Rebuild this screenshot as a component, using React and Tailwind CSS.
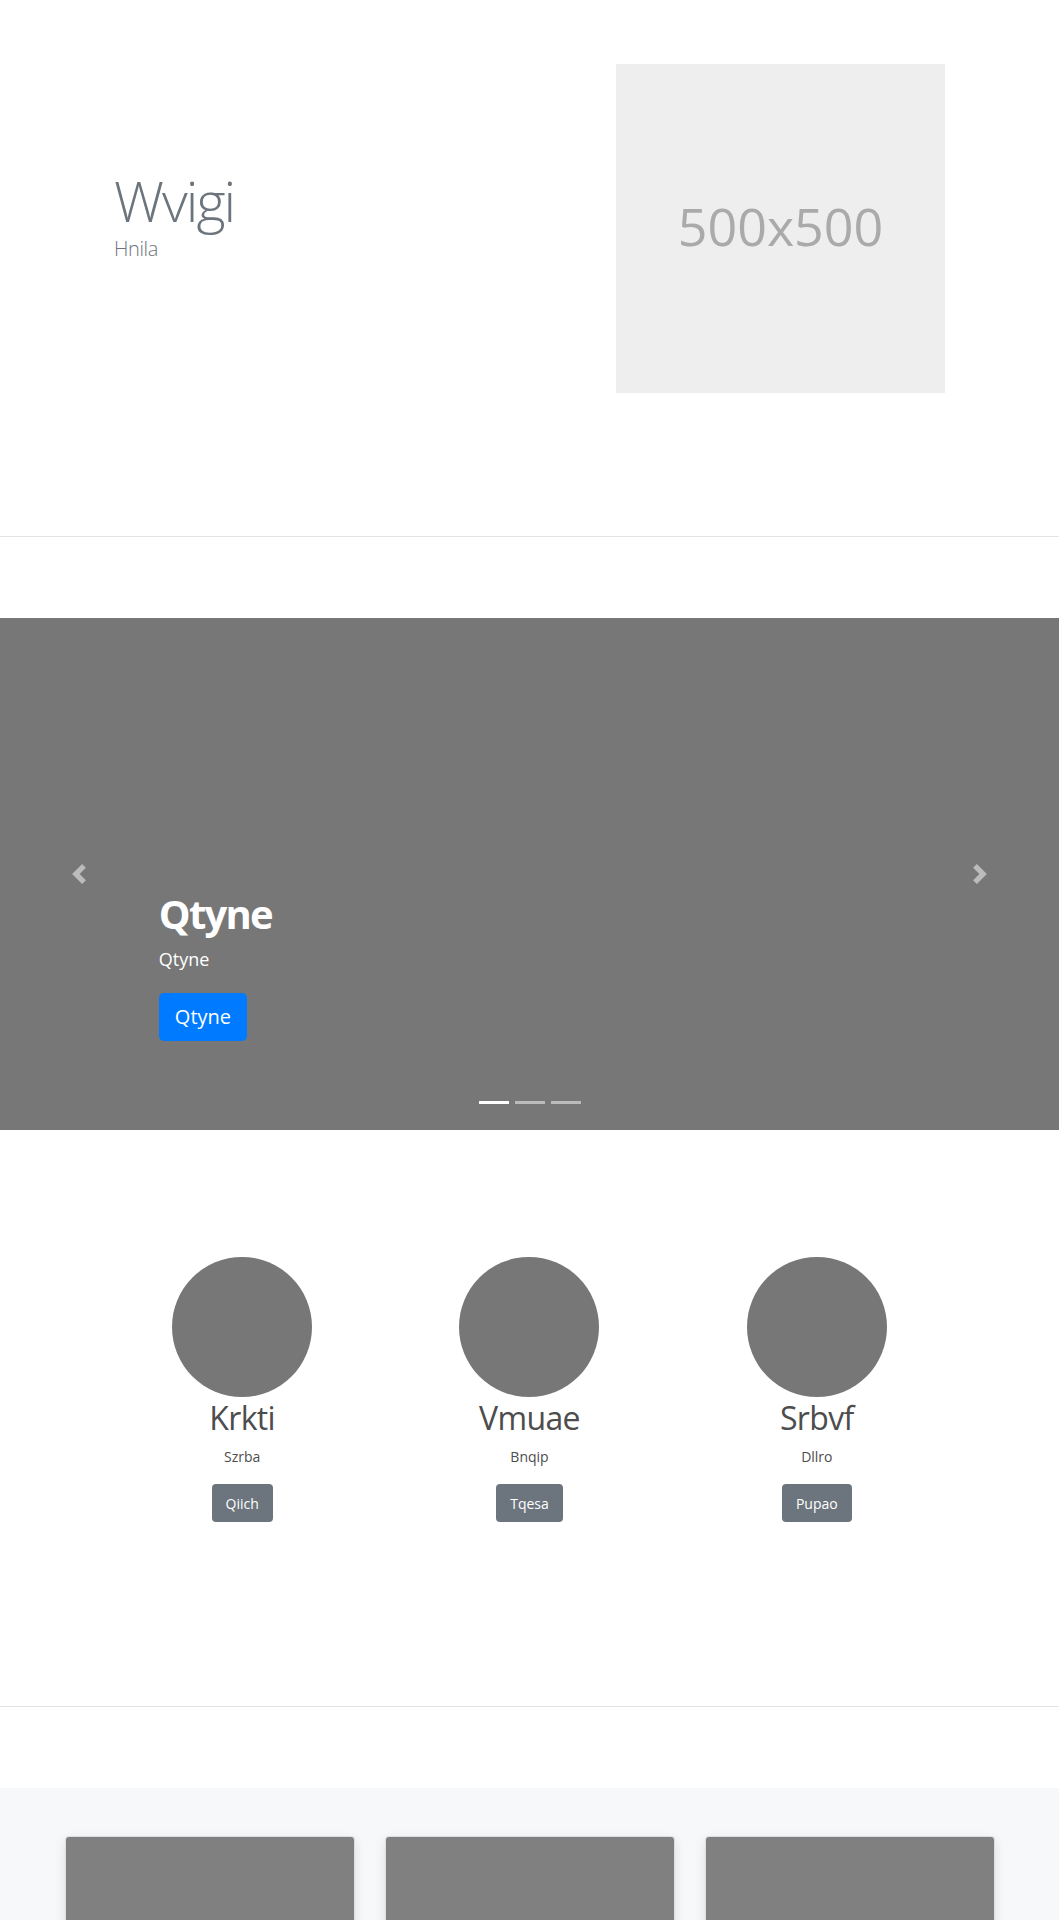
import React from "react";

const font = { fontFamily: '"Open Sans", "Noto Sans", "Liberation Sans", sans-serif' };

function ChevronLeft() {
  return (
    <svg width="20" height="20" viewBox="0 0 8 8" fill="#fff">
      <path d="M5.25 0l-4 4 4 4 1.5-1.5L4.25 4l2.5-2.5L5.25 0z" />
    </svg>
  );
}
function ChevronRight() {
  return (
    <svg width="20" height="20" viewBox="0 0 8 8" fill="#fff">
      <path d="M2.75 0l-1.5 1.5L3.75 4l-2.5 2.5L2.75 8l4-4-4-4z" />
    </svg>
  );
}

const items = [
  { h: "Krkti", p: "Szrba", b: "Qiich" },
  { h: "Vmuae", p: "Bnqip", b: "Tqesa" },
  { h: "Srbvf", p: "Dllro", b: "Pupao" },
];

export default function App() {
  return (
    <div className="w-full bg-white" style={font}>
      {/* Hero */}
      <section className="flex h-[537px] border-b border-[#e3e3e3] pt-[64px]">
        <div className="w-[616px] pl-[114px] pt-[103px]">
          <h1 className="text-[56px] leading-[1.2] font-light tracking-[-0.035em] text-[#6c757d]">Wvigi</h1>
          <p className="text-[20px] leading-[1.5] font-light tracking-[-0.02em] text-[#6c757d]">Hnila</p>
        </div>
        <div className="flex h-[329px] w-[329px] items-center justify-center bg-[#eeeeee] pb-[6px]">
          <span className="text-[52px] text-[#aaaaaa]">500x500</span>
        </div>
      </section>

      {/* Carousel */}
      <section className="relative mt-[81px] h-[512px] bg-[#777777]">
        <div className="absolute left-0 top-0 flex h-full w-[15%] items-center justify-center opacity-50">
          <ChevronLeft />
        </div>
        <div className="absolute right-0 top-0 flex h-full w-[15%] items-center justify-center opacity-50">
          <ChevronRight />
        </div>
        <div className="absolute left-[15%] top-[272px] text-left text-white">
          <h2 className="mb-[8px] text-[40px] font-bold leading-[1.2] tracking-[-0.045em]">Qtyne</h2>
          <p className="text-[18px] leading-[1.5]">Qtyne</p>
          <button className="mt-[20px] h-[48px] rounded-[5px] bg-[#007bff] px-[16px] text-[20px] leading-[1.5] text-white">
            Qtyne
          </button>
        </div>
        <div className="absolute bottom-[26px] left-0 right-0 flex justify-center gap-[6px]">
          <span className="h-[3px] w-[30px] bg-white" />
          <span className="h-[3px] w-[30px] bg-white opacity-50" />
          <span className="h-[3px] w-[30px] bg-white opacity-50" />
        </div>
      </section>

      {/* Marketing */}
      <section className="mt-[127px] border-b border-[#e3e3e3] pb-[184px]">
        <div className="mx-auto grid w-[862px] grid-cols-3">
          {items.map((it) => (
            <div key={it.h} className="flex flex-col items-center text-center">
              <div className="h-[140px] w-[140px] rounded-full bg-[#777777]" />
              <h2 className="mt-[2px] text-[32px] leading-[1.2] tracking-[-0.02em] text-[#4d4d4d]">{it.h}</h2>
              <p className="mt-[9px] text-[14px] leading-[1.5] text-[#4d4d4d]">{it.p}</p>
              <button className="mt-[17px] h-[38px] rounded-[4px] bg-[#6c757d] px-[14px] text-[14px] text-white">
                {it.b}
              </button>
            </div>
          ))}
        </div>
      </section>

      {/* Album */}
      <section className="mt-[81px] bg-[#f7f8fa] pt-[48px] pb-[48px]">
        <div className="mx-auto grid w-[960px] grid-cols-3 gap-[30px] px-[15px]">
          {[0, 1, 2].map((i) => (
            <div
              key={i}
              className="overflow-hidden rounded-[4px] border border-[rgba(0,0,0,0.125)] bg-white shadow-[0_0.25rem_0.75rem_rgba(0,0,0,0.1)]"
            >
              <div className="h-[225px] bg-[#808080]" />
              <div className="p-[20px]">
                <p className="text-[16px] text-[#212529]">&nbsp;</p>
              </div>
            </div>
          ))}
        </div>
      </section>
    </div>
  );
}
